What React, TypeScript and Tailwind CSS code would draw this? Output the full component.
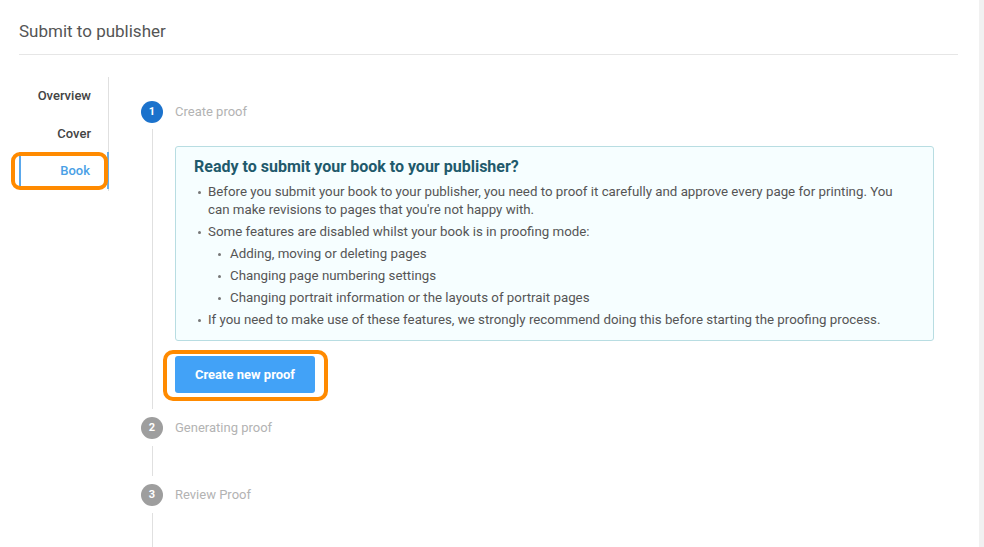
const font = { fontFamily: 'Roboto, "Liberation Sans", Arial, sans-serif' }

function Dot() {
  return (
    <span className="w-[10px] shrink-0 pt-[8px]">
      <span className="block w-[3px] h-[3px] rounded-full bg-[#777]"></span>
    </span>
  )
}

function SubDot() {
  return (
    <span className="w-[12px] shrink-0 pt-[8px]">
      <span className="block w-[3px] h-[3px] rounded-full bg-[#777]"></span>
    </span>
  )
}

function StepHead({ n, label, active }: { n: number; label: string; active?: boolean }) {
  return (
    <div className="flex items-center h-[22px]">
      <div
        className={
          active
            ? 'w-[22px] h-[22px] rounded-full bg-[#1b72cc] text-white text-[11px] font-bold flex items-center justify-center'
            : 'w-[22px] h-[22px] rounded-full bg-[#9e9e9e] text-white text-[11px] font-bold flex items-center justify-center'
        }
      >
        {n}
      </div>
      <span className="ml-[12px] text-[13px] text-[#b3b3b3]">{label}</span>
    </div>
  )
}

export default function App() {
  return (
    <div className="w-[984px] h-[547px] bg-white overflow-hidden flex" style={font}>
      <div className="flex-1 pl-[19px] pr-[21px]">
        <div className="h-[55px] pt-[19px] border-b border-[#e6e6e6]">
          <h1 className="text-[17px] leading-[24px] text-[#555]">Submit to publisher</h1>
        </div>

        <div className="flex">
          {/* side nav */}
          <div className="w-[90px] mt-[22px] self-start">
            <div className="h-[38px] flex items-center justify-end pr-[17px] border-r border-[#e0e0e0] text-[13px] font-medium text-[#444]">
              Overview
            </div>
            <div className="h-[37px] flex items-center justify-end pr-[17px] border-r border-[#e0e0e0] text-[13px] font-medium text-[#444]">
              Cover
            </div>
            <div className="relative h-[37px] flex items-center justify-end pr-[17px] border-l-2 border-l-[#5aa8ec] border-r-2 border-r-[#6aaee8] text-[13px] font-medium text-[#4a9fe6]">
              Book
              <div className="absolute left-[-10px] right-[-1px] top-0 bottom-[-1px] border-4 border-[#ff8a00] rounded-[9px]"></div>
            </div>
            <div className="h-[2px] border-r border-[#e0e0e0]"></div>
          </div>

          {/* steps */}
          <div className="ml-[32px] mt-[46px] flex-1">
            <StepHead n={1} label="Create proof" active />
            <div className="flex">
              <div className="w-[22px] flex justify-center pt-[6px] pb-[8px]">
                <div className="w-px bg-[#e0e0e0]"></div>
              </div>
              <div className="pl-[12px] pt-[23px] pb-[24px] pr-[24px] flex-1">
                <div className="border border-[#b8dde2] bg-[#f6feff] rounded-[3px] pl-[18px] pr-[30px] pt-[10px] pb-[11px]">
                  <h2 className="text-[16px] leading-[20px] font-bold text-[#1f5a6c] mb-[6px]">
                    Ready to submit your book to your publisher?
                  </h2>
                  <ul className="text-[13.3px] leading-[18px] text-[#555]">
                    <li className="flex pl-[4px] mb-[4px]">
                      <Dot />
                      <span>
                        Before you submit your book to your publisher, you need to proof it carefully and approve every page for printing. You can make revisions to pages that you're not happy with.
                      </span>
                    </li>
                    <li className="flex pl-[4px] mb-[4px]">
                      <Dot />
                      <span>Some features are disabled whilst your book is in proofing mode:</span>
                    </li>
                    <li className="pl-[24px]">
                      <ul>
                        <li className="flex mb-[4px]">
                          <SubDot />
                          <span>Adding, moving or deleting pages</span>
                        </li>
                        <li className="flex mb-[4px]">
                          <SubDot />
                          <span>Changing page numbering settings</span>
                        </li>
                        <li className="flex mb-[4px]">
                          <SubDot />
                          <span>Changing portrait information or the layouts of portrait pages</span>
                        </li>
                      </ul>
                    </li>
                    <li className="flex pl-[4px]">
                      <Dot />
                      <span>If you need to make use of these features, we strongly recommend doing this before starting the proofing process.</span>
                    </li>
                  </ul>
                </div>

                <div className="mt-[15px] relative w-[140px]">
                  <button className="w-[140px] h-[37px] bg-[#42a2f7] text-white text-[13px] font-bold rounded-[3px]">
                    Create new proof
                  </button>
                  <div className="absolute left-[-12px] right-[-13px] top-[-6px] bottom-[-8px] border-4 border-[#ff8a00] rounded-[10px]"></div>
                </div>
              </div>
            </div>

            <StepHead n={2} label="Generating proof" />
            <div className="flex h-[45px]">
              <div className="w-[22px] flex justify-center pt-[7px] pb-[8px]">
                <div className="w-px bg-[#e0e0e0]"></div>
              </div>
            </div>

            <StepHead n={3} label="Review Proof" />
            <div className="flex h-[60px]">
              <div className="w-[22px] flex justify-center pt-[7px]">
                <div className="w-px bg-[#e0e0e0]"></div>
              </div>
            </div>
          </div>
        </div>
      </div>
      <div className="w-[5px] bg-[#f1f1f1]"></div>
    </div>
  )
}
